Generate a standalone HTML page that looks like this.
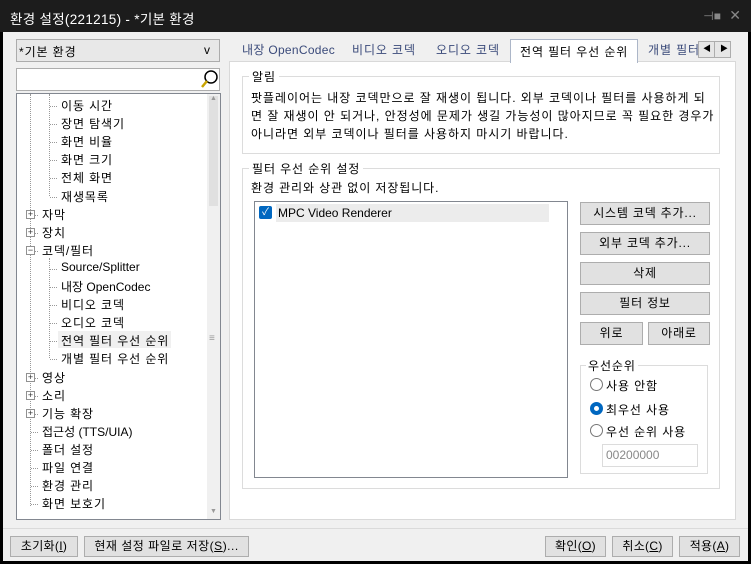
<!DOCTYPE html><html><head><meta charset="utf-8"><style>
*{box-sizing:border-box;margin:0;padding:0}
body{width:751px;height:564px;background:#000;font-family:"Liberation Sans","Noto Sans CJK KR",sans-serif;font-size:12px;color:#000;position:relative;overflow:hidden}
.a{position:absolute;white-space:nowrap}
#title{left:0;top:0;width:751px;height:32px;background:#1c1c1c;color:#fff;font-size:13.5px;padding:8px 0 0 10px;letter-spacing:0.3px}
#body{left:3px;top:32px;width:745px;height:529px;background:#f0f0f0}
.box{position:absolute;background:#fff;border:1px solid #adadad}
.btn{position:absolute;background:#e1e1e1;border:1px solid #adadad;text-align:center;font-size:12px;line-height:21px;letter-spacing:0.8px}
.t{position:absolute;white-space:nowrap;font-size:12px;letter-spacing:0.9px}
.grp{position:absolute;border:1px solid #dcdcdc}
.grp span{position:absolute;left:6px;top:-9px;background:#fff;padding:0 3px;letter-spacing:0.9px}
.exp{position:absolute;width:9px;height:9px;border:1px solid #919191;background:#fff;font-size:9px;line-height:7px;text-align:center;color:#333;letter-spacing:0}
.radio{position:absolute;width:13px;height:13px;border:1px solid #555;border-radius:50%;background:#fff}
.dot{position:absolute;border-left:1px dotted #999}
.hd{position:absolute;border-top:1px dotted #999;width:7px}
.l{letter-spacing:0}
</style></head><body>
<div class="a" id="title">환경 설정(221215) - *기본 환경</div>
<div class="a" style="right:30px;top:9px;color:#888;font-size:12px">⊣■</div>
<div class="a" style="right:10px;top:7px;color:#888;font-size:14px">✕</div>
<div class="a" id="body"></div>
<div class="box" style="left:16px;top:39px;width:204px;height:23px;background:#e8e8e8;border-color:#acacac"></div>
<div class="t" style="left:19px;top:43px">*기본 환경</div>
<div class="t" style="left:204px;top:43px">v</div>
<div class="box" style="left:16px;top:68px;width:204px;height:23px"></div>
<svg class="a" style="left:199px;top:69px" width="20" height="20"><circle cx="12" cy="8" r="6" fill="none" stroke="#000" stroke-width="1.5"/><line x1="8" y1="12" x2="3" y2="18" stroke="#c9a400" stroke-width="2.5"/></svg>
<div class="box" style="left:16px;top:93px;width:205px;height:427px;border-color:#828790"></div>
<div class="a" style="left:207px;top:94px;width:13px;height:425px;background:#f0f0f0"></div>
<div class="a" style="left:209px;top:96px;width:9px;height:110px;background:#e0e0e0"></div>
<div class="t" style="left:210px;top:95px;font-size:7px;color:#999">▲</div>
<div class="t" style="left:210px;top:508px;font-size:7px;color:#999">▼</div>
<div class="dot" style="left:30px;top:94px;height:412px"></div>
<div class="dot" style="left:49px;top:94px;height:102px"></div>
<div class="dot" style="left:49px;top:258px;height:100px"></div>
<div class="a" style="left:58px;top:331px;width:113px;height:17px;background:#f0f0f0"></div>
<div class="t" style="left:209px;top:333px;color:#999;font-size:10px">≡</div>
<div id="tree"></div>
<div class="t" style="left:242px;top:41px;color:#3a4a7a;letter-spacing:0.3px">내장 OpenCodec</div>
<div class="t" style="left:352px;top:41px;color:#3a4a7a">비디오 코덱</div>
<div class="t" style="left:436px;top:41px;color:#3a4a7a">오디오 코덱</div>
<div class="t" style="left:648px;top:41px;color:#3a4a7a">개별 필터</div>
<div class="box" style="left:229px;top:61px;width:507px;height:459px;border-color:#d9d9d9"></div>
<div class="a" style="left:510px;top:39px;width:128px;height:24px;background:#fff;border:1px solid #acb6c8;border-bottom:none"></div>
<div class="t" style="left:520px;top:43px">전역 필터 우선 순위</div>
<div class="a" style="left:698px;top:41px;width:33px;height:17px;background:#e6e6e6;border:1px solid #adadad"></div>
<div class="a" style="left:714px;top:41px;width:1px;height:17px;background:#adadad"></div>
<div class="t" style="left:703px;top:43px;font-size:8px">◀</div>
<div class="t" style="left:720px;top:43px;font-size:8px">▶</div>
<div class="grp" style="left:242px;top:76px;width:478px;height:78px"><span>알림</span></div>
<div class="t" style="left:251px;top:89px;line-height:18px;font-size:12px;letter-spacing:0.95px">팟플레이어는 내장 코덱만으로 잘 재생이 됩니다. 외부 코덱이나 필터를 사용하게 되<br>면 잘 재생이 안 되거나, 안정성에 문제가 생길 가능성이 많아지므로 꼭 필요한 경우가<br>아니라면 외부 코덱이나 필터를 사용하지 마시기 바랍니다.</div>
<div class="grp" style="left:242px;top:168px;width:478px;height:321px"><span>필터 우선 순위 설정</span></div>
<div class="t" style="left:251px;top:179px">환경 관리와 상관 없이 저장됩니다.</div>
<div class="box" style="left:254px;top:201px;width:314px;height:277px;border-color:#828790"></div>
<div class="a" style="left:276px;top:204px;width:273px;height:18px;background:#ececec"></div>
<div class="a" style="left:259px;top:206px;width:13px;height:13px;background:#0067c0;border-radius:2px;color:#fff;font-size:10px;line-height:13px;text-align:center">✓</div>
<div class="t l" style="left:278px;top:206px">MPC Video Renderer</div>
<div class="btn" style="left:580px;top:202px;width:130px;height:23px">시스템 코덱 추가...</div>
<div class="btn" style="left:580px;top:232px;width:130px;height:23px">외부 코덱 추가...</div>
<div class="btn" style="left:580px;top:262px;width:130px;height:23px">삭제</div>
<div class="btn" style="left:580px;top:292px;width:130px;height:23px">필터 정보</div>
<div class="btn" style="left:580px;top:322px;width:63px;height:23px">위로</div>
<div class="btn" style="left:648px;top:322px;width:62px;height:23px">아래로</div>
<div class="grp" style="left:580px;top:365px;width:128px;height:109px"><span style="left:5px;padding:0 2px">우선순위</span></div>
<div class="radio" style="left:590px;top:378px;border-color:#777"></div>
<div class="t" style="left:606px;top:377px">사용 안함</div>
<div class="radio" style="left:590px;top:402px;border:4px solid #0067c0"></div>
<div class="t" style="left:606px;top:401px">최우선 사용</div>
<div class="radio" style="left:590px;top:424px;border-color:#777"></div>
<div class="t" style="left:606px;top:423px">우선 순위 사용</div>
<div class="box" style="left:602px;top:444px;width:96px;height:23px;border-color:#dcdcdc"></div>
<div class="t l" style="left:606px;top:448px;color:#888">00200000</div>
<div class="a" style="left:3px;top:528px;width:745px;height:1px;background:#dadada"></div>
<div class="btn" style="left:10px;top:536px;width:68px;height:21px;line-height:19px;letter-spacing:0.3px">초기화(<u>I</u>)</div>
<div class="btn" style="left:84px;top:536px;width:165px;height:21px;line-height:19px;letter-spacing:0.5px">현재 설정 파일로 저장(<u>S</u>)...</div>
<div class="btn" style="left:545px;top:536px;width:61px;height:21px;line-height:19px;letter-spacing:0.3px">확인(<u>O</u>)</div>
<div class="btn" style="left:612px;top:536px;width:61px;height:21px;line-height:19px;letter-spacing:0.3px">취소(<u>C</u>)</div>
<div class="btn" style="left:679px;top:536px;width:61px;height:21px;line-height:19px;letter-spacing:0.3px">적용(<u>A</u>)</div>
<script>
var items=[[2,"이동 시간"],[2,"장면 탐색기"],[2,"화면 비율"],[2,"화면 크기"],[2,"전체 화면"],[2,"재생목록"],[1,"자막","+"],[1,"장치","+"],[1,"코덱/필터","−"],[2,"Source/Splitter"],[2,"내장 OpenCodec"],[2,"비디오 코덱"],[2,"오디오 코덱"],[2,"전역 필터 우선 순위"],[2,"개별 필터 우선 순위"],[1,"영상","+"],[1,"소리","+"],[1,"기능 확장","+"],[1,"접근성 (TTS/UIA)"],[1,"폴더 설정"],[1,"파일 연결"],[1,"환경 관리"],[1,"화면 보호기"]];
var h="";items.forEach(function(it,i){var y=97+i*18.1;var x=it[0]==2?61:42;
var ls=/[A-Za-z]/.test(it[1])?' l':'';
h+='<div class="hd" style="left:'+(it[0]==2?50:31)+'px;top:'+(y+9)+'px"></div>';
if(it[2])h+='<div class="exp" style="left:26px;top:'+(y+4)+'px">'+it[2]+'</div>';
h+='<div class="t'+ls+'" style="left:'+x+'px;top:'+y+'px">'+it[1]+'</div>';});
document.getElementById("tree").innerHTML=h;
</script>
</body></html>
